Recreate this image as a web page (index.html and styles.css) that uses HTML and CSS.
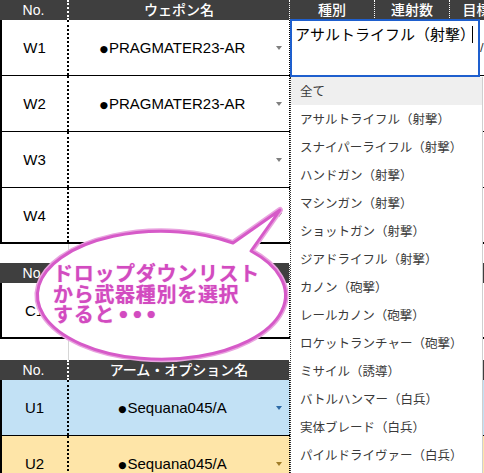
FILE: index.html
```html
<!DOCTYPE html>
<html lang="ja">
<head>
<meta charset="utf-8">
<title>Sheet</title>
<link rel="stylesheet" href="styles.css">
</head>
<body>
<div class="page">
  <div class="sheet">
    <div class="tbl">
      <div class="hdr"><div class="c no">No.</div><div class="c name">ウェポン名</div><div class="c type">種別</div><div class="c rate">連射数</div><div class="c tgt">目標</div></div>
      <div class="row"><div class="c no">W1</div><div class="c name"><span class="val"><span class="dot">●</span>PRAGMATER23-AR</span><i class="arr"></i></div><div class="c type"></div><div class="c rate"></div><div class="c tgt peek">/</div></div>
      <div class="row"><div class="c no">W2</div><div class="c name"><span class="val"><span class="dot">●</span>PRAGMATER23-AR</span><i class="arr"></i></div><div class="c type"></div><div class="c rate"></div><div class="c tgt"></div></div>
      <div class="row"><div class="c no">W3</div><div class="c name"><span class="val"></span><i class="arr"></i></div><div class="c type"></div><div class="c rate"></div><div class="c tgt"></div></div>
      <div class="row last"><div class="c no">W4</div><div class="c name"><span class="val"></span><i class="arr"></i></div><div class="c type"></div><div class="c rate"></div><div class="c tgt"></div></div>
    </div>
    <div class="gap g1"><div class="gc"></div><div></div></div>
    <div class="tbl">
      <div class="hdr"><div class="c no">No.</div><div class="c name"></div><div class="c type"></div><div class="c rate"></div><div class="c tgt"></div></div>
      <div class="row last"><div class="c no">C1</div><div class="c name"><span class="val"></span><i class="arr"></i></div><div class="c type"></div><div class="c rate"></div><div class="c tgt"></div></div>
    </div>
    <div class="gap g2"><div class="gc"></div><div></div></div>
    <div class="tbl">
      <div class="hdr"><div class="c no">No.</div><div class="c name">アーム・オプション名</div><div class="c type"></div><div class="c rate"></div><div class="c tgt"></div></div>
      <div class="row blue"><div class="c no">U1</div><div class="c name"><span class="val"><span class="dot">●</span>Sequana045/A</span><i class="arr arr-blue"></i></div><div class="c type"></div><div class="c rate"></div><div class="c tgt"></div></div>
      <div class="row yellow"><div class="c no">U2</div><div class="c name"><span class="val"><span class="dot">●</span>Sequana045/A</span><i class="arr arr-gold"></i></div><div class="c type"></div><div class="c rate"></div><div class="c tgt"></div></div>
    </div>
  </div>

  <div class="editbox"><span class="edit-text">アサルトライフル（射撃）</span><span class="caret"></span></div>

  <ul class="dropdown">
    <li class="active">全て</li>
    <li>アサルトライフル（射撃）</li>
    <li>スナイパーライフル（射撃）</li>
    <li>ハンドガン（射撃）</li>
    <li>マシンガン（射撃）</li>
    <li>ショットガン（射撃）</li>
    <li>ジアドライフル（射撃）</li>
    <li>カノン（砲撃）</li>
    <li>レールカノン（砲撃）</li>
    <li>ロケットランチャー（砲撃）</li>
    <li>ミサイル（誘導）</li>
    <li>バトルハンマー（白兵）</li>
    <li>実体ブレード（白兵）</li>
    <li>パイルドライヴァー（白兵）</li>
  </ul>

  <svg class="bubble" width="484" height="473" viewBox="0 0 484 473">
    <path class="bubble-glow" d="M 233 243 L 280 210 L 251 251 A 124 64 0 1 1 233 243 Z"/>
    <path class="bubble-line" d="M 233 243 L 280 210 L 251 251 A 124 64 0 1 1 233 243 Z"/>
  </svg>
  <div class="bubble-text">ドロップダウンリスト<br>から武器種別を選択<br>すると<span class="dots">•••</span></div>
</div>
</body>
</html>
```

FILE: styles.css
```css
* { box-sizing: border-box; }
html, body { margin: 0; padding: 0; background: #fff; }
.page {
  position: relative;
  width: 484px;
  height: 473px;
  overflow: hidden;
  font-family: "Liberation Sans", Arial, sans-serif;
  color: #000;
}
.sheet { display: flex; flex-direction: column; width: 504px; }
.hdr, .row, .gap {
  display: grid;
  grid-template-columns: 69px 221px 85px 75px 54px;
}
.hdr {
  height: 20px;
  background: #3f3f3f;
  color: #fff;
  font-size: 14px;
  font-family: "Liberation Sans", "Noto Sans CJK JP", sans-serif;
  font-weight: 500;
}
.hdr .c {
  display: flex;
  align-items: center;
  justify-content: center;
  line-height: 1;
  white-space: nowrap;
  border-right: 1px dotted #fff;
}
.hdr .no { border-right: 2px dotted #fff; }
.row {
  height: 56px;
  border-bottom: 1px solid #000;
  font-size: 15px;
  background: #fff;
}
.row.last { border-bottom: 2px solid #000; }
.row.blue { background: #c2e1f5; }
.row.yellow { background: #fee5a8; }
.row .c { display: flex; align-items: center; }
.row .no {
  justify-content: center;
  border-left: 2px solid #000;
  border-right: 2px dotted #000;
}
.row .name {
  border-right: 1px dotted #000;
  display: grid;
  grid-template-columns: 1fr auto;
  align-items: center;
}
.val { text-align: center; white-space: nowrap; }
.dot { font-family: "DejaVu Sans", sans-serif; font-size: 9.5px; vertical-align: 1px; margin-right: 1px; }
.arr {
  width: 0;
  height: 0;
  border-left: 3.5px solid transparent;
  border-right: 3.5px solid transparent;
  border-top: 4px solid #7f7f7f;
  margin-right: 7px;
}
.arr-blue { border-top-color: #2d6aa6; }
.arr-gold { border-top-color: #a07c28; }
.peek { padding-left: 30px; font-size: 13px; color: #333; align-items: flex-start !important; padding-top: 20px; }
.gap { height: 19px; }
.gap.g2 { height: 21px; }
.gap .gc { border-right: 1px solid #d6d6d6; }

.editbox {
  position: absolute;
  left: 290px;
  top: 19px;
  width: 190px;
  height: 58px;
  background: #fff;
  border: 2px solid #1e5fce;
  padding: 3px 0 0 3px;
  font-family: "Noto Sans CJK JP", sans-serif;
  font-size: 15px;
  line-height: 20px;
  white-space: nowrap;
  display: flex;
  align-items: flex-start;
}
.caret {
  display: inline-block;
  width: 1px;
  height: 17px;
  background: #000;
  margin-top: 2px;
  margin-left: -3px;
}

.dropdown {
  position: absolute;
  left: 290px;
  top: 77px;
  width: 193px;
  height: 396px;
  margin: 0;
  padding: 0;
  list-style: none;
  background: #fff;
  border-left: 1px dotted #333;
  border-right: 1px solid #cfcfcf;
  font-family: "Noto Sans CJK JP", sans-serif;
  font-size: 12.5px;
  color: #3a3a3a;
}
.dropdown li {
  height: 28px;
  line-height: 28px;
  padding-left: 9px;
  white-space: nowrap;
}
.dropdown li.active { background: #efefef; }

.bubble {
  position: absolute;
  left: 0;
  top: 0;
  pointer-events: none;
}
.bubble-glow {
  fill: #fff;
  stroke: #e9a4df;
  stroke-width: 6;
  stroke-linejoin: round;
}
.bubble-line {
  fill: #fff;
  stroke: #d65ac8;
  stroke-width: 3;
  stroke-linejoin: round;
}
.bubble-text {
  position: absolute;
  left: 53px;
  top: 263px;
  font-family: "Noto Sans CJK JP", sans-serif;
  font-weight: 700;
  font-size: 20px;
  line-height: 20.5px;
  letter-spacing: 0.7px;
  color: #d24bc0;
  white-space: nowrap;
  text-shadow: 0 0 1px #e88fdc;
}
.dots {
  font-family: "DejaVu Sans", sans-serif;
  font-size: 20px;
  letter-spacing: 1px;
  margin-left: 2px;
}
```
